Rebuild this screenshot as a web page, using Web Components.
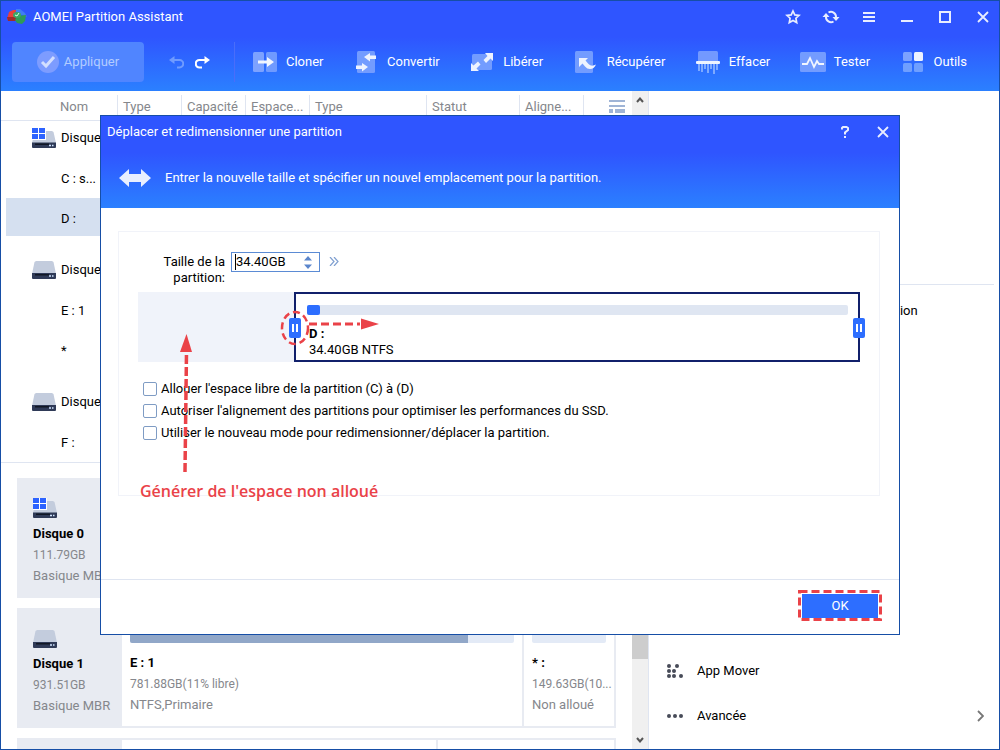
<!DOCTYPE html>
<html lang="fr">
<head>
<meta charset="utf-8">
<title>AOMEI Partition Assistant</title>
<style>
  html, body { margin: 0; height: 100%; }
  body {
    font: 13px/16px Roboto, "Noto Sans", sans-serif; color: #000; overflow: hidden;
    --frame: #164ea6; --line: #dfe5f1; --card: #e8ebf2; --muted: #85878c;
    --accent: #2d6eff; --alert: #ea4248;
    --head: linear-gradient(#2f55ff 0%, #2f55ff 40%, #2b80ff 100%);
  }
</style>
</head>
<body>
<partition-app></partition-app>

<script>
const ICONS = {
  logo: '<svg width="20" height="16" viewBox="0 0 20 16"><path d="M0 10 2 3 6 1h3l-1 6 1 4H1Z" fill="#e9403b"/><path d="M0 8h9l1 4H1Z" fill="#a12a2c"/><path d="M9 0h4l5 4 2 4-5-2-6-2Z" fill="#3f7ef3"/><path d="M10 7l9-1-1 6-3 3-5-1-2-3Z" fill="#2f9a58"/><ellipse cx="10" cy="6" rx="4" ry="3" fill="#37a866"/><path d="m8 6 2 1 2-3" fill="none" stroke="#d8ffe6"/></svg>',
  star: '<svg width="16" height="16" viewBox="0 0 16 16"><path d="m8 2 1.8 3.9 4.2.5-3.1 2.8.8 4.3L8 11.4l-3.7 2.1.8-4.3L2 6.400l4.200-.5Z" fill="none" stroke="#e8edff" stroke-width="1.700"/></svg>',
  sync: '<svg width="18" height="16" viewBox="0 0 18 16"><path d="M6.500 3.500A5 5 0 0 1 14 8M11.500 12.500A5 5 0 0 1 4 8" fill="none" stroke="#e8edff" stroke-width="2"/><path d="M10.500 8H17.500l-3.500 4ZM.5 8h7L4 4Z" fill="#e8edff"/></svg>',
  menu: '<svg width="12" height="12" viewBox="0 0 12 12"><path d="M0 2h12M0 6h12M0 10h12" stroke="#e8edff" stroke-width="2"/></svg>',
  min: '<svg width="12" height="12" viewBox="0 0 12 12"><path d="M0 10h12" stroke="#e8edff" stroke-width="2"/></svg>',
  max: '<svg width="12" height="12" viewBox="0 0 12 12"><path d="M1 1h10v10H1Z" fill="none" stroke="#e8edff" stroke-width="2"/></svg>',
  close: '<svg width="12" height="12" viewBox="0 0 12 12"><path d="m1 1 10 10M11 1 1 11" stroke="#e8edff" stroke-width="1.800"/></svg>',
  help: '<svg width="10" height="14" viewBox="0 0 10 14"><path d="M2 4.500V3l1-1h3.500L8 3v2L5 7.500V9.500M5 11v2" fill="none" stroke="#e8edff" stroke-width="2"/></svg>',
  check: '<svg width="22" height="22" viewBox="0 0 22 22"><circle cx="11" cy="11" r="11" fill="#7d9cff"/><path d="m5 11 4 4 8-9" fill="none" stroke="#d3dfff" stroke-width="3"/></svg>',
  undo: '<svg width="15" height="13" viewBox="0 0 15 13"><path d="M4 4h6.500a3.500 3.500 0 0 1 0 7.500H8" fill="none" stroke="#6f9bff" stroke-width="2"/><path d="M5.500 0v8L0 4Z" fill="#6f9bff"/></svg>',
  redo: '<svg width="15" height="13" viewBox="0 0 15 13"><path d="M11 4H4.500a3.500 3.500 0 0 0 0 7.500H7" fill="none" stroke="#fff" stroke-width="2.200"/><path d="M9.500 0v8L15 4Z" fill="#fff"/></svg>',
  clone: '<svg width="24" height="20" viewBox="0 0 24 20"><rect width="11" height="20" rx="1.500" fill="#7da2ff"/><rect x="13" width="11" height="20" rx="1.500" fill="#6f9aff"/><path d="M5 8.500h9V5l7 5-7 5v-3.500H5Z" fill="#f2f6ff"/></svg>',
  convert: '<svg width="20" height="22" viewBox="0 0 20 22"><rect x="1" width="18" height="22" rx="1.500" fill="#739cff"/><path d="M20 4.500h-6V2L8 6l6 4.500V8h6ZM0 14.500h6V12l6 4-6 4.500V18H0Z" fill="#eef3ff"/></svg>',
  free: '<svg width="22" height="18" viewBox="0 0 22 18"><rect x="1" y="1" width="20" height="16" rx="1.500" fill="#739cff"/><path d="M14 0h8v8l-2.500-2.500L15 10l-2.500-3 4-4ZM0 10l2.500 2.500L7 8.500l2.500 3-4 4L8 18H0Z" fill="#eef3ff"/></svg>',
  recover: '<svg width="22" height="22" viewBox="0 0 22 22"><rect width="18" height="22" rx="1.500" fill="#739cff"/><path d="M4 7h9l-2.500 2.500 3 3.500q3 3 7.500.5Q19 18 15 18q-3 0-5-2.500l-2.500-3L4 16Z" fill="#eef3ff"/></svg>',
  wipe: '<svg width="24" height="23" viewBox="0 0 24 23"><path d="M2 1.500Q2 0 3.500 0h17Q22 0 22 1.500V10H2Z" fill="#7399ff"/><path d="M3 12v8M6 12v9M9 12v6M12 12v10M15 12v6M18 12v11M21 12v7" stroke="#7eaaff" stroke-width="2"/><rect y="10" width="24" height="3" rx="1" fill="#eef3ff"/></svg>',
  test: '<svg width="26" height="20" viewBox="0 0 26 20"><rect width="26" height="20" rx="1.500" fill="#739cff"/><path d="M2 12h5l3-6 4 9 3-6 2 3h5" fill="none" stroke="#f2f6ff" stroke-width="1.800"/></svg>',
  tools: '<svg width="20" height="20" viewBox="0 0 20 20"><rect width="9" height="9" rx="1.500" fill="#7da2ff"/><rect x="11" width="9" height="9" rx="1.500" fill="#eef3ff"/><rect y="11" width="9" height="9" rx="1.500" fill="#6f9fff"/><rect x="11" y="11" width="9" height="9" rx="1.500" fill="#6f9fff"/></svg>',
  disk: '<svg width="24" height="18" viewBox="0 0 24 18"><path d="M4 0h16l1.500 1L24 13H0L2.500 1Z" fill="#c3ccdd"/><path d="M0 12h24v5q0 1-1 1H1q-1 0-1-1Z" fill="#2f3a57"/><path d="M3 13h14v1.500H3Z" fill="#111725"/><path d="M17 15h2M20 15h1.500" stroke="#cfe4ff" stroke-width="1.500"/></svg>',
  sysdisk: '<svg width="24" height="20" viewBox="0 0 24 20"><path d="M4 3h16l1.500 1L24 15H0L2.500 4Z" fill="#c3ccdd"/><path d="M0 14.500h24V19q0 1-1 1H1q-1 0-1-1Z" fill="#2f3a57"/><path d="M3 15.500h14V17H3Z" fill="#111725"/><path d="M17 17.500h2M20 17.500h1.500" stroke="#cfe4ff" stroke-width="1.500"/><path d="M0 0h14v12H0Z" fill="#fff"/><path d="M0 0h6v5H0ZM7 0h6v5H7ZM0 6h6v5H0ZM7 6h6v5H7Z" fill="#2d63ff"/></svg>',
  columns: '<svg width="16" height="14" viewBox="0 0 16 14"><path d="M0 1h16M0 6h16" stroke="#9fb4d6" stroke-width="2"/><path d="M0 9h4v4H0ZM6 9h10v4H6Z" fill="#9fb4d6"/></svg>',
  up: '<svg width="8" height="6" viewBox="0 0 8 6"><path d="m1 5 3-3.500L7 5" fill="none" stroke="#555" stroke-width="2"/></svg>',
  down: '<svg width="8" height="6" viewBox="0 0 8 6"><path d="m1 1 3 3.500L7 1" fill="none" stroke="#555" stroke-width="2"/></svg>',
  resize: '<svg width="32" height="18" viewBox="0 0 32 18"><path d="M0 9 10 0v5h12V0l10 9-10 9v-5H10v5Z" fill="#e9efff"/></svg>',
  more: '<svg width="10" height="9" viewBox="0 0 10 9"><path d="m1 0 4 4.500L1 9M5 0l4 4.500L5 9" fill="none" stroke="#7f9fd0" stroke-width="1.200"/></svg>',
  spin: '<svg width="8" height="13" viewBox="0 0 8 13"><path d="M0 4.500 4 0l4 4.500ZM0 8.500h8L4 13Z" fill="#5b86cc"/></svg>',
  appmover: '<svg width="16" height="14" viewBox="0 0 16 14" fill="#474b58"><circle cx="2" cy="2" r="2"/><circle cx="10" cy="2" r="2"/><circle cx="2" cy="7" r="2"/><circle cx="7" cy="7" r="2"/><circle cx="2" cy="12" r="2"/><circle cx="7" cy="12" r="2"/><circle cx="14" cy="12" r="2"/></svg>',
  dots: '<svg width="16" height="4" viewBox="0 0 16 4" fill="#474b58"><circle cx="2" cy="2" r="2"/><circle cx="8" cy="2" r="2"/><circle cx="14" cy="2" r="2"/></svg>',
  chevron: '<svg width="7" height="12" viewBox="0 0 7 12"><path d="m1 1 5 5-5 5" fill="none" stroke="#777" stroke-width="1.800"/></svg>'
};

const BASE = `<style>
  *, *::before, *::after { box-sizing: border-box; }
  button { font: inherit; color: inherit; background: none; border: 0; padding: 0; cursor: pointer; }
</style>`;

function define(name, template) {
  customElements.define(name, class extends HTMLElement {
    connectedCallback() {
      if (this.shadowRoot) return;
      this.attachShadow({ mode: 'open' }).innerHTML = BASE + template(this);
    }
  });
}

define('ui-icon', el => `<style>
  :host { display: inline-flex; flex: none; } svg { display: block; flex: none; }
</style>${ICONS[el.getAttribute('name')]}`);

define('icon-button', el => `<style>
  :host { display: flex; }
  button { width: 18px; height: 18px; display: grid; place-items: center; }
</style><button type="button" aria-label="${el.getAttribute('label')}"><ui-icon name="${el.getAttribute('icon')}"></ui-icon></button>`);

define('tool-button', el => `<style>
  :host { display: block; color: #fff; }
  button { display: flex; align-items: center; gap: 9px; height: 40px; }
  ui-icon { width: 24px; justify-content: center; }
</style><button type="button"><ui-icon name="${el.getAttribute('icon')}"></ui-icon><slot></slot></button>`);

define('app-header', () => `<style>
  :host { display: block; background: var(--head); color: #fff; }
  .title { display: flex; align-items: center; height: 32px; padding: 0 7px 0 6px; gap: 6px; }
  .controls { display: flex; gap: 20px; margin-left: auto; }
  .bar { display: flex; align-items: center; padding: 9px 32px 9px 11px; }
  .apply { width: 132px; height: 40px; border-radius: 4px; background: #5085ff; color: #b3ccff;
    display: flex; align-items: center; justify-content: center; gap: 5px; }
  .history { display: flex; gap: 8px; margin: 0 23px; }
  .tools { display: flex; flex: 1; justify-content: space-between; padding-left: 18px; border-left: 1px solid #4a6dfa; }
</style>
<div class="title"><ui-icon name="logo"></ui-icon><span>AOMEI Partition Assistant</span>
  <div class="controls">
    <icon-button icon="star" label="Favoris"></icon-button><icon-button icon="sync" label="Actualiser"></icon-button>
    <icon-button icon="menu" label="Menu"></icon-button><icon-button icon="min" label="Réduire"></icon-button>
    <icon-button icon="max" label="Agrandir"></icon-button><icon-button icon="close" label="Fermer"></icon-button>
  </div>
</div>
<div class="bar">
  <button class="apply" type="button"><ui-icon name="check"></ui-icon>Appliquer</button>
  <div class="history"><icon-button icon="undo" label="Annuler"></icon-button><icon-button icon="redo" label="Rétablir"></icon-button></div>
  <div class="tools">
    <tool-button icon="clone">Cloner</tool-button><tool-button icon="convert">Convertir</tool-button>
    <tool-button icon="free">Libérer</tool-button><tool-button icon="recover">Récupérer</tool-button>
    <tool-button icon="wipe">Effacer</tool-button><tool-button icon="test">Tester</tool-button>
    <tool-button icon="tools">Outils</tool-button>
  </div>
</div>`);

define('scroll-rail', () => `<style>
  :host { display: flex; flex-direction: column; flex: none; align-items: center; width: 16px; padding: 6px 0; background: #f0f0f0; }
  .thumb { flex: 0 1 170px; align-self: stretch; margin: 14px 0 auto; background: #cdcdcd; }
</style><ui-icon name="up"></ui-icon><div class="thumb"></div><ui-icon name="down"></ui-icon>`);

define('volume-table', () => {
  const disk = (name, icon) => `<tr class="disk"><td colspan="8"><span><ui-icon name="${icon}"></ui-icon>${name}</span></td></tr>`;
  const vol = (name, cls = '') => `<tr class="vol ${cls}"><td>${name}</td><td colspan="7"></td></tr>`;
  return `<style>
  :host { display: block; flex: 1; min-width: 0; }
  table { width: 100%; border-collapse: separate; border-spacing: 0; table-layout: fixed; }
  th { height: 30px; padding: 2px 0 0 6px; text-align: left; font-weight: 400; color: var(--muted);
    border-bottom: 1px solid var(--line); white-space: nowrap;
    background: linear-gradient(var(--line), var(--line)) left 4px / 1px 100% no-repeat; }
  th:first-child { padding-left: 59px; background: none; }
  th:last-child { padding-left: 26px; }
  th ui-icon { vertical-align: middle; }
  td { padding: 0; }
  .disk td { height: 52px; padding: 15px 0 3px 31px; }
  tr.disk:first-child td { height: 37px; padding-top: 0; }
  .disk span { display: flex; align-items: center; gap: 5px; }
  .vol td { height: 40px; padding-top: 3px; border-bottom: 2px solid transparent; background-clip: padding-box; }
  .vol td:first-child { border-left: 5px solid transparent; padding-left: 55px; white-space: nowrap; }
  .sel td { background-color: #d5e0f0; }
</style>
<table>
  <colgroup><col style="width:116px"><col style="width:64px"><col style="width:64px"><col style="width:64px"><col style="width:117px"><col style="width:93px"><col style="width:64px"><col></colgroup>
  <thead><tr><th>Nom</th><th>Type</th><th>Capacité</th><th>Espace...</th><th>Type</th><th>Statut</th><th>Aligne...</th><th aria-label="Colonnes"><ui-icon name="columns"></ui-icon></th></tr></thead>
  <tbody>${disk('Disque', 'sysdisk')}${vol('C : s...')}${vol('D :', 'sel')}${disk('Disque', 'disk')}${vol('E : 1')}${vol('*')}${disk('Disque', 'disk')}${vol('F :')}</tbody>
</table>`;
});

define('disk-card', el => `<style>
  :host { display: flex; flex: none; min-height: 120px; background: var(--card); padding: 2px 2px 2px 0; gap: 2px; }
  .info { width: 103px; flex: none; padding: 17px 0 0 16px; white-space: nowrap; display: flex; flex-direction: column; gap: 5px; color: var(--muted); }
  ui-icon { height: 21px; align-items: flex-end; margin-bottom: 3px; }
  b { color: #000; font-weight: 700; }
  .size { font-size: 12px; }
</style>
<div class="info"><ui-icon name="${el.getAttribute('icon')}"></ui-icon><b>${el.getAttribute('name')}</b><span class="size">${el.getAttribute('size')}</span><span>${el.getAttribute('kind')}</span></div>
<slot></slot>`);

define('volume-block', el => `<style>
  :host { display: flex; flex-direction: column; gap: 5px; min-width: 0; padding: 23px 0 0 8px; background: #fff; color: var(--muted); white-space: nowrap; overflow: hidden; }
  .bar { height: 10px; margin: 0 8px 7px 0; border-radius: 2px; background: #e3eaf6; overflow: hidden; }
  .used { height: 10px; width: ${el.getAttribute('used') || 0}%; background: #91a7c8; }
  b { color: #000; font-weight: 700; }
  .size { font-size: 12px; }
</style>
${el.hasAttribute('name') ? `<div class="bar"><div class="used"></div></div><b>${el.getAttribute('name')}</b><span class="size">${el.getAttribute('size')}</span><span>${el.getAttribute('kind')}</span>` : ''}`);

define('disk-map', () => `<style>
  :host { display: flex; flex-direction: column; gap: 10px; flex: 1; min-width: 0; padding: 15px 16px 0; overflow: hidden; }
</style>
<disk-card icon="sysdisk" name="Disque 0" size="111.79GB" kind="Basique MBR"><volume-block style="flex:1"></volume-block></disk-card>
<disk-card icon="disk" name="Disque 1" size="931.51GB" kind="Basique MBR">
  <volume-block style="flex:392 1 0" used="88" name="E : 1" size="781.88GB(11% libre)" kind="NTFS,Primaire"></volume-block>
  <volume-block style="flex:82 1 0" name="* :" size="149.63GB(10..." kind="Non alloué"></volume-block>
</disk-card>
<disk-card icon="disk" name="" size="" kind=""><volume-block style="flex:306 1 0"></volume-block><volume-block style="flex:168 1 0"></volume-block></disk-card>`);

define('side-item', el => `<style>
  :host { display: block; }
  button { display: flex; align-items: center; width: 100%; height: 45px; gap: 14px; padding: 0 15px 0 18px; text-align: left; white-space: nowrap; }
  .pic { width: 16px; display: flex; flex: none; }
  .go { margin-left: auto; }
</style><button type="button"><span class="pic">${el.hasAttribute('icon') ? `<ui-icon name="${el.getAttribute('icon')}"></ui-icon>` : ''}</span><slot></slot>${el.hasAttribute('more') ? '<ui-icon class="go" name="chevron"></ui-icon>' : ''}</button>`);

define('side-panel', () => `<style>
  :host { display: flex; flex-direction: column; border-left: 1px solid var(--line); padding-bottom: 11px; min-width: 0; }
  .summary { flex: 0 0 194px; margin: 0 5px 3px; border-bottom: 1px solid var(--line); }
  .last { margin-top: auto; }
</style>
<div class="summary"></div>
<side-item>Redimensionner / déplacer la partition</side-item>
<div class="last"><side-item icon="appmover">App Mover</side-item><side-item icon="dots" more>Avancée</side-item></div>`);

define('drag-handle', () => `<style>
  :host { position: absolute; z-index: 1; top: 24px; width: 12px; height: 20px; border-radius: 2px; background: var(--accent);
    display: flex; justify-content: center; align-items: center; gap: 2px; }
  i { width: 2px; height: 8px; background: #fff; }
</style><i></i><i></i>`);

define('partition-slider', () => `<style>
  :host { display: flex; height: 70px; background: #f0f3fa; }
  .free { flex: 156 1 0; }
  .part { flex: 541 1 0; position: relative; border: 2px solid #11206b; background: #fff; padding: 11px 10px 0 11px; display: flex; flex-direction: column; }
  .track { height: 10px; border-radius: 2px; background: #dfe6f2; margin-bottom: 11px; flex: none; }
  .used { width: 13px; height: 10px; border-radius: 2px; background: var(--accent); }
  b { font-weight: 700; } b, span { padding-left: 2px; }
  .l { left: -7px; } .r { right: -7px; }
  svg { position: absolute; left: -16px; top: 14px; overflow: visible; }
</style>
<div class="free"></div>
<div class="part"><div class="track"><div class="used"></div></div><b>D :</b><span>34.40GB NTFS</span>
  <drag-handle class="l"></drag-handle><drag-handle class="r"></drag-handle>
  <svg width="100" height="40" fill="none" stroke="#ea4248" stroke-width="3"><ellipse cx="15" cy="20" rx="13" ry="16" stroke-width="2.500" stroke-dasharray="7 4"/><path d="M29 16h51" stroke-dasharray="8 4"/><path d="M81 10.500 99 16l-18 5.500Z" fill="#ea4248" stroke="none"/></svg>
</div>`);

define('check-option', () => `<style>
  :host { display: block; }
  label { display: flex; align-items: center; gap: 4px; height: 22px; }
  input { appearance: none; width: 14px; height: 14px; margin: 0; border: 1px solid #7f9cc4; border-radius: 2px; background: #fff; }
  input:checked { background: var(--accent); }
</style><label><input type="checkbox"><slot></slot></label>`);

define('resize-dialog', () => `<style>
  :host { display: flex; flex-direction: column; border: 1px solid var(--frame); background: #fff; }
  header { background: var(--head); color: #fff; height: 92px; flex: none; }
  .title { display: flex; align-items: center; height: 32px; padding: 0 7px 0 6px; }
  .title div { display: flex; gap: 20px; margin-left: auto; }
  .lead { display: flex; align-items: center; gap: 14px; height: 60px; padding: 0 18px; }
  main { position: relative; border: 1px solid #f1f3f9; margin: 23px 19px 0 17px; height: 265px; padding: 22px 19px 0; }
  .size { display: flex; height: 38px; align-items: flex-start; gap: 6px; }
  .size label { width: 87px; text-align: right; flex: none; }
  .field { display: flex; align-items: center; height: 20px; width: 89px; border: 1px solid #5b8bd4; padding: 0 7px 0 3px; margin-top: -2px; }
  .field input { flex: 1; min-width: 0; border: 0; border-left: 1px solid #000; outline: 0; padding: 0; font: inherit; color: inherit; height: 16px; }
  .size button { margin-left: 3px; }
  .opts { margin: 16px 0 0 5px; }
  .note { position: absolute; left: 21px; top: 248px; color: var(--alert); font: 600 16px/22px "Open Sans", "Noto Sans", sans-serif; white-space: nowrap; }
  .arrow { position: absolute; left: 60px; top: 102px; }
  footer { margin-top: auto; height: 55px; border-top: 1px solid var(--line); display: flex; justify-content: flex-end; padding: 10px 17px 0; }
  .mark { position: relative; width: 84px; height: 31px; padding: 4px; }
  .mark svg { position: absolute; inset: 0; pointer-events: none; }
  .ok { width: 100%; height: 24px; background: var(--accent); color: #fff; display: block; }
</style>
<header>
  <div class="title">Déplacer et redimensionner une partition<div><icon-button icon="help" label="Aide"></icon-button><icon-button icon="close" label="Fermer"></icon-button></div></div>
  <div class="lead"><ui-icon name="resize"></ui-icon>Entrer la nouvelle taille et spécifier un nouvel emplacement pour la partition.</div>
</header>
<main>
  <div class="size"><label for="size">Taille de la partition:</label>
    <div class="field"><input id="size" value="34.40GB"><ui-icon name="spin"></ui-icon></div>
    <button type="button" aria-label="Plus"><ui-icon name="more"></ui-icon></button></div>
  <partition-slider></partition-slider>
  <div class="opts">
    <check-option>Allouer l'espace libre de la partition (C) à (D)</check-option>
    <check-option>Autoriser l'alignement des partitions pour optimiser les performances du SSD.</check-option>
    <check-option>Utiliser le nouveau mode pour redimensionner/déplacer la partition.</check-option>
  </div>
  <svg class="arrow" width="16" height="140" viewBox="0 0 16 140"><path d="M7.500 0 13 18H1Z" fill="#ea4248"/><path d="M6 138 7.500 18" stroke="#ea4248" stroke-width="3.500" stroke-dasharray="9 3"/></svg>
  <div class="note">Générer de l'espace non alloué</div>
</main>
<footer><div class="mark"><button class="ok" type="button">OK</button>
  <svg width="84" height="31"><rect x="1.500" y="1.500" width="81" height="28" fill="none" stroke="#ea4248" stroke-width="3" stroke-dasharray="8 4"/></svg></div></footer>`);

define('partition-app', () => `<style>
  :host { display: flex; flex-direction: column; position: relative; height: 100vh; border: 1px solid var(--frame); background: #fff; overflow: hidden; box-sizing: border-box; }
  .work { flex: 1; min-height: 0; display: grid; grid-template-columns: 647fr 351fr; grid-template-rows: minmax(0, 1fr); }
  .left { display: flex; flex-direction: column; min-width: 0; }
  .top { display: flex; border-bottom: 1px solid var(--line); }
  .bottom { display: flex; flex: 1; min-height: 0; }
  resize-dialog { position: absolute; top: 114px; left: 50%; width: 80vw; min-height: 520px; margin-left: -40vw; box-sizing: border-box; }
</style>
<app-header></app-header>
<div class="work">
  <div class="left">
    <div class="top"><volume-table></volume-table><scroll-rail></scroll-rail></div>
    <div class="bottom"><disk-map></disk-map><scroll-rail></scroll-rail></div>
  </div>
  <side-panel></side-panel>
</div>
<resize-dialog></resize-dialog>`);
</script>
</body>
</html>
